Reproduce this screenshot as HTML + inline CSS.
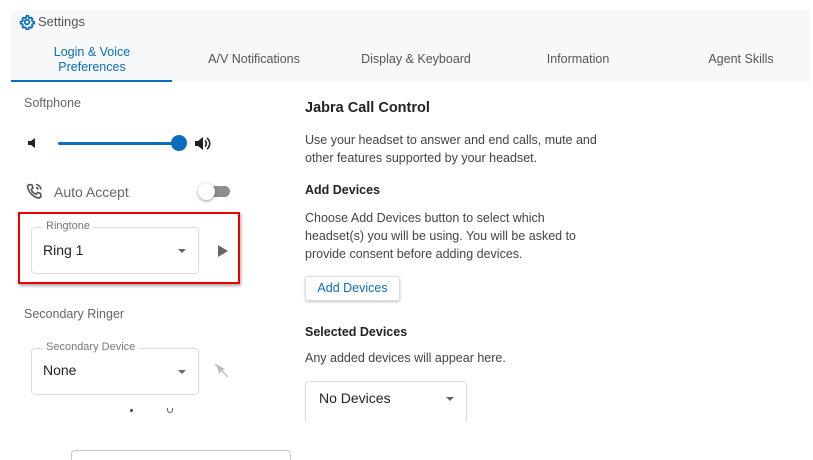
<!DOCTYPE html>
<html><head><style>
html,body{margin:0;width:813px;height:460px;overflow:hidden;}
body{background:#fff;position:relative;font-family:"Liberation Sans",sans-serif;}
.a{position:absolute;white-space:nowrap;line-height:1;}
.g{color:#666;font-size:12.5px;}
.t{color:#444;font-size:12.5px;}
.b{color:#222;font-size:12.5px;font-weight:bold;}
.field{position:absolute;border:1px solid #ddd;border-radius:4px;background:#fff;}
.caret{position:absolute;width:0;height:0;border-left:4px solid transparent;border-right:4px solid transparent;border-top:4px solid #666;}
.tab{position:absolute;top:52px;font-size:12.5px;color:#555;text-align:center;width:162px;}
</style></head><body>
<div style="position:absolute;left:11px;top:10px;width:799px;height:72px;background:#f7f8fa;"></div>
<svg class="a" style="left:19px;top:14px" width="16" height="16" viewBox="0 0 24 24"><path fill="none" stroke="#0a6ebd" stroke-width="2.6" d="M12 2.5l2 .3.6 2.5 1.6.9 2.4-.8 1.5 1.6-.8 2.4.9 1.6 2.5.6v2.8l-2.5.6-.9 1.6.8 2.4-1.5 1.6-2.4-.8-1.6.9-.6 2.5h-2.8l-.6-2.5-1.6-.9-2.4.8-1.6-1.6.8-2.4-.9-1.6-2.5-.6v-2.8l2.5-.6.9-1.6-.8-2.4 1.6-1.6 2.4.8 1.6-.9.6-2.5z"/><circle cx="12" cy="12" r="3.5" fill="none" stroke="#0a6ebd" stroke-width="2.6"/></svg>
<div class="a" style="left:38px;top:15px;font-size:13px;color:#555">Settings</div>
<div class="tab" style="left:11px;top:45px;color:#0a6ebd;line-height:15px">Login &amp; Voice<br>Preferences</div>
<div class="tab" style="left:173px">A/V Notifications</div>
<div class="tab" style="left:335px">Display &amp; Keyboard</div>
<div class="tab" style="left:497px">Information</div>
<div class="tab" style="left:660px">Agent Skills</div>
<div style="position:absolute;left:11px;top:80px;width:161px;height:2px;background:#0a6ebd"></div>

<div class="a g" style="left:24px;top:97px">Softphone</div>
<svg class="a" style="left:27px;top:137px" width="12" height="12" viewBox="0 0 12 12"><path d="M1 4h3l4-3v10l-4-3H1z" fill="#222"/></svg>
<div style="position:absolute;left:58px;top:142px;width:122px;height:3px;border-radius:2px;background:#0a6ebd"></div>
<div style="position:absolute;left:171px;top:135px;width:16px;height:16px;border-radius:50%;background:#0a6ebd"></div>
<svg class="a" style="left:194px;top:136px" width="17" height="15" viewBox="0 0 17 15"><path d="M1 5h3l5-4v13l-5-4H1z" fill="#222"/><path d="M11 4.5a4 4 0 0 1 0 6M13 2a7 7 0 0 1 0 11" stroke="#222" stroke-width="1.6" fill="none"/></svg>

<svg class="a" style="left:26px;top:183px" width="17" height="17" viewBox="0 0 17 17"><path d="M3 1.5l3 .5 1 3-1.8 1.3a8 8 0 0 0 5 5L11.5 9.5l3 1 .5 3-1.5 1.5C8 15 2 9 1.5 3z" fill="none" stroke="#555" stroke-width="1.6"/><path d="M10 1.5a5.5 5.5 0 0 1 5 5M10 4.5a2.5 2.5 0 0 1 2.2 2.2" stroke="#555" stroke-width="1.5" fill="none"/></svg>
<div class="a" style="left:54px;top:185px;font-size:14px;color:#666">Auto Accept</div>
<div style="position:absolute;left:201px;top:186px;width:29px;height:11px;border-radius:6px;background:#8e8e8e"></div>
<div style="position:absolute;left:198px;top:183px;width:17px;height:17px;border-radius:50%;background:#fff;box-shadow:0 1px 3px rgba(0,0,0,.4)"></div>

<div style="position:absolute;left:18px;top:212px;width:218px;height:68px;border:2.5px solid #e00;box-shadow:1px 2px 3px rgba(0,0,0,.35)"></div>
<div class="field" style="left:31px;top:227px;width:166px;height:45px"></div>
<div class="a" style="left:43px;top:221px;font-size:11px;color:#777;background:#fff;padding:0 3px">Ringtone</div>
<div class="a" style="left:43px;top:243px;font-size:14px;color:#222">Ring 1</div>
<div class="caret" style="left:178px;top:249px"></div>
<svg class="a" style="left:218px;top:245px" width="10" height="12" viewBox="0 0 10 12"><path d="M0 0l10 6-10 6z" fill="#666"/></svg>

<div class="a g" style="left:24px;top:308px">Secondary Ringer</div>
<div class="field" style="left:31px;top:348px;width:166px;height:45px"></div>
<div class="a" style="left:43px;top:342px;font-size:11px;color:#777;background:#fff;padding:0 3px">Secondary Device</div>
<div class="a" style="left:43px;top:363px;font-size:14px;color:#222">None</div>
<div class="caret" style="left:178px;top:370px"></div>
<svg class="a" style="left:214px;top:363px" width="15" height="15" viewBox="0 0 15 15"><path d="M2 1l9 5-4 1.5-1.5 4z" fill="#bbb"/><path d="M1 1l13 13" stroke="#bbb" stroke-width="1.3"/></svg>
<div style="position:absolute;left:130px;top:409px;width:3px;height:3px;background:#555;border-radius:1px"></div>
<div style="position:absolute;left:167px;top:408px;width:4px;height:4px;border:1px solid #666;border-top:none;border-radius:0 0 3px 3px"></div>
<div style="position:absolute;left:71px;top:450px;width:218px;height:9px;border:1px solid #ccc;border-bottom:none;border-radius:4px 4px 0 0"></div>

<div class="a" style="left:305px;top:101px;font-size:14.5px;color:#222;font-weight:bold">Jabra Call Control</div>
<div class="a t" style="left:305px;top:131px;line-height:18px">Use your headset to answer and end calls, mute and<br>other features supported by your headset.</div>
<div class="a b" style="left:305px;top:184px">Add Devices</div>
<div class="a t" style="left:305px;top:209px;line-height:18px">Choose Add Devices button to select which<br>headset(s) you will be using. You will be asked to<br>provide consent before adding devices.</div>
<div style="position:absolute;left:305px;top:276px;width:93px;height:23px;border:1px solid #ddd;border-radius:3px;box-shadow:0 1px 2px rgba(0,0,0,.25);"></div>
<div class="a" style="left:305px;top:282px;width:95px;text-align:center;font-size:12.5px;color:#0a6ebd">Add Devices</div>
<div class="a b" style="left:305px;top:326px">Selected Devices</div>
<div class="a t" style="left:305px;top:352px">Any added devices will appear here.</div>
<div class="field" style="left:305px;top:381px;width:160px;height:40px;border-bottom:none;border-radius:4px 4px 0 0"></div>
<div class="a" style="left:319px;top:391px;font-size:14px;color:#222">No Devices</div>
<div class="caret" style="left:446px;top:397px"></div>
</body></html>
